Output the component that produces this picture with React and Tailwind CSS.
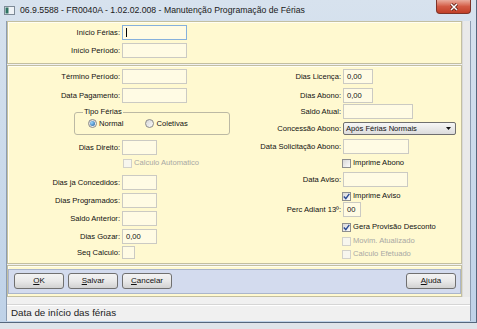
import React from 'react'

const font = "font-['Liberation_Sans',Arial,sans-serif]"

function TextBox({ className = '', value, focused }) {
  return (
    <div
      className={`flex items-center pl-[3px] border bg-[#fffbe4] text-[7.6px] text-[#111] ${
        focused ? 'border-[#86b0dc]' : 'border-[#cbcac3]'
      } ${className}`}
    >
      {focused && <span className="w-px h-[9px] bg-black" />}
      {value}
    </div>
  )
}

function Field({ label, labelW, box, h = 'h-[15px]', value, focused, row = '' }) {
  return (
    <div className={`flex items-center ${row}`}>
      <span className={`${labelW} pr-[2px] text-right whitespace-nowrap`}>{label}</span>
      <TextBox className={`${box} ${h}`} value={value} focused={focused} />
    </div>
  )
}

function Check({ checked, disabled, label, className = '' }) {
  return (
    <div className={`flex items-center h-[10px] ${className}`}>
      <span
        className={`w-[9px] h-[9px] border flex items-center justify-center ${
          disabled
            ? 'border-[#d2d1ca] bg-[#f7f6ee]'
            : 'border-[#8e8f8f] bg-gradient-to-br from-[#d8d8d8] to-[#fbfbfb]'
        }`}
      >
        {checked && (
          <svg width="7" height="7" viewBox="0 0 7 7">
            <path d="M0.8 3.6 L2.8 5.6 L6.3 0.9" fill="none" stroke="#2a4a93" strokeWidth="1.4" />
          </svg>
        )}
      </span>
      <span className={`ml-[2px] whitespace-nowrap ${disabled ? 'text-[#a8a8a4]' : ''}`}>{label}</span>
    </div>
  )
}

function Radio({ on, label, className = '' }) {
  return (
    <div className={`flex items-center ${className}`}>
      <span className="w-[9px] h-[9px] rounded-full border border-[#8a8a8a] bg-gradient-to-br from-[#d6d6d6] to-[#fafafa] flex items-center justify-center">
        {on && (
          <span className="w-[5px] h-[5px] rounded-full bg-[radial-gradient(circle_at_35%_35%,#9ad6ff,#1c5a9a)]" />
        )}
      </span>
      <span className="ml-[2px]">{label}</span>
    </div>
  )
}

function Btn({ u, rest, className = '' }) {
  return (
    <div
      className={`w-[50px] h-[16px] border border-[#707070] rounded-[3px] bg-gradient-to-b from-[#f3f3f3] via-[#e9e9e9] to-[#d2d2d2] flex items-center justify-center text-[8px] text-[#111] ${className}`}
    >
      <span className="underline underline-offset-1">{u}</span>
      {rest}
    </div>
  )
}

const panel = 'border border-[#c3bfa0] bg-[#fff9d0] shadow-[inset_1px_1px_0_#fffef3]'

export default function App() {
  const L = 'w-[114px]'
  const R = 'w-[103px]'
  return (
    <div className={`w-[477px] h-[329px] overflow-hidden bg-[#dfe4ea] ${font}`}>
      <div className="w-[477px] h-[323px] flex flex-col bg-gradient-to-b from-[#d7e2ee] to-[#bfd2e8] border-r border-b border-[#55667c]">
        {/* Title bar */}
        <div className="h-[21px] shrink-0 flex items-start">
          <svg className="mt-[6px] ml-[4px]" width="11" height="9" viewBox="0 0 11 9">
            <rect x="0.5" y="0.5" width="10" height="8" fill="#eef2f6" stroke="#7d8a97" />
            <rect x="1.5" y="1.5" width="3" height="6" fill="#2f7362" />
          </svg>
          <span className="mt-[4px] ml-[5px] text-[8.7px] text-[#1a1a1a] whitespace-nowrap">
            06.9.5588 - FR0040A - 1.02.02.008 - Manutenção Programação de Férias
          </span>
          <div className="ml-auto mr-[5px] w-[35px] h-[14px] rounded-b-[4px] border border-t-0 border-[#7e3328] bg-gradient-to-b from-[#e9ac9e] via-[#d25a44] to-[#c13f27] flex items-center justify-center">
            <svg width="10" height="8" viewBox="0 0 10 8">
              <path d="M2 1 L8 7 M8 1 L2 7" stroke="#5b1a10" strokeWidth="3" />
              <path d="M2 1 L8 7 M8 1 L2 7" stroke="#ffffff" strokeWidth="1.5" />
            </svg>
          </div>
        </div>

        {/* Client area */}
        <div className="ml-[6px] w-[465px] h-[300px] border-x border-[#8c9cb1] bg-[#f0f0f0] flex flex-col text-[7.6px] text-[#111]">
          <div className="flex h-[276px]">
            <div className="w-[455px] flex flex-col">
              {/* Panel 1 */}
              <div className={`h-[43px] pt-[3px] ${panel}`}>
                <Field label="Início Férias:" labelW={L} box="w-[65px]" focused />
                <Field label="Início Período:" labelW={L} box="w-[65px]" row="mt-[3px]" />
              </div>

              {/* Panel 2 */}
              <div className={`mt-[1px] h-[199px] flex ${panel}`}>
                <div className="w-[232px] flex flex-col">
                  <Field label="Término Período:" labelW={L} box="w-[65px]" row="mt-[3px]" />
                  <Field label="Data Pagamento:" labelW={L} box="w-[65px]" row="mt-[4px]" />
                  <div className="relative mt-[9px] ml-[66px] w-[156px] h-[23px] border border-[#bcb9a4] rounded-[3px] flex items-center pt-[1px]">
                    <span className="absolute left-[8px] -top-[6px] px-[1px] bg-[#fff9d0] leading-[10px]">Tipo Férias</span>
                    <Radio on label="Normal" className="ml-[13px]" />
                    <Radio label="Coletivas" className="ml-[22px]" />
                  </div>
                  <Field label="Dias Direito:" labelW={L} box="w-[35px]" row="mt-[5px]" />
                  <Check disabled label="Calculo Automatico" className="mt-[3px] ml-[115px]" />
                  <Field label="Dias ja Concedidos:" labelW={L} box="w-[35px]" row="mt-[7px]" />
                  <Field label="Dias Programados:" labelW={L} box="w-[35px]" row="mt-[3px]" />
                  <Field label="Saldo Anterior:" labelW={L} box="w-[35px]" row="mt-[3px]" />
                  <Field label="Dias Gozar:" labelW={L} box="w-[35px]" value="0,00" row="mt-[3px]" />
                  <Field label="Seq Calculo:" labelW={L} box="w-[13px]" h="h-[13px]" row="mt-[2px]" />
                </div>
                <div className="flex-1 flex flex-col">
                  <Field label="Dias Licença:" labelW={R} box="w-[30px]" value="0,00" row="mt-[3px]" />
                  <Field label="Dias Abono:" labelW={R} box="w-[30px]" value="0,00" row="mt-[4px]" />
                  <Field label="Saldo Atual:" labelW={R} box="w-[70px]" row="mt-[1px]" />
                  <div className="flex items-center mt-[3px]">
                    <span className={`${R} pr-[2px] text-right whitespace-nowrap`}>Concessão Abono:</span>
                    <div className="w-[113px] h-[13px] border border-[#6f6f6f] rounded-[2px] bg-gradient-to-b from-[#f6f6f6] to-[#dcdcdc] flex items-center justify-between pl-[2px] pr-[4px]">
                      <span>Após Férias Normais</span>
                      <svg width="5" height="3" viewBox="0 0 5 3">
                        <path d="M0 0 H5 L2.5 3 Z" fill="#111" />
                      </svg>
                    </div>
                  </div>
                  <Field label="Data Solicitação Abono:" labelW={R} box="w-[66px]" row="mt-[4px]" />
                  <Check label="Imprime Abono" className="mt-[4px] ml-[102px]" />
                  <Field label="Data Aviso:" labelW={R} box="w-[65px]" row="mt-[4px]" />
                  <Check checked label="Imprime Aviso" className="mt-[4px] ml-[102px]" />
                  <Field label="Perc Adiant 13º:" labelW={R} box="w-[18px]" value="00" row="mt-[1px]" />
                  <Check checked label="Gera Provisão Desconto" className="mt-[5px] ml-[102px]" />
                  <Check disabled label="Movim. Atualizado" className="mt-[4px] ml-[102px]" />
                  <Check disabled label="Calculo Efetuado" className="mt-[3px] ml-[102px]" />
                </div>
              </div>

              {/* Panel 3 - buttons */}
              <div className={`mt-[1px] h-[32px] pt-[3px] ${panel}`}>
                <div className="h-[25px] border border-[#aab5cb] bg-[#d3dbee] flex items-start pt-[3px] pl-[5px] pr-[4px] gap-[4px]">
                  <Btn u="O" rest="K" />
                  <Btn u="S" rest="alvar" />
                  <Btn u="C" rest="ancelar" />
                  <Btn u="A" rest="juda" className="ml-auto" />
                </div>
              </div>
            </div>
            <div className="w-[8px] bg-[#e9e9e9] border-l border-[#d9d9d9]" />
          </div>

          {/* Status bar */}
          <div className="mt-[7px] h-[17px] border-t border-[#d5d5d5] shadow-[inset_0_1px_0_#ffffff] flex items-center pl-[4px] text-[9.8px] text-[#222]">
            Data de início das férias
          </div>
        </div>
      </div>
    </div>
  )
}
